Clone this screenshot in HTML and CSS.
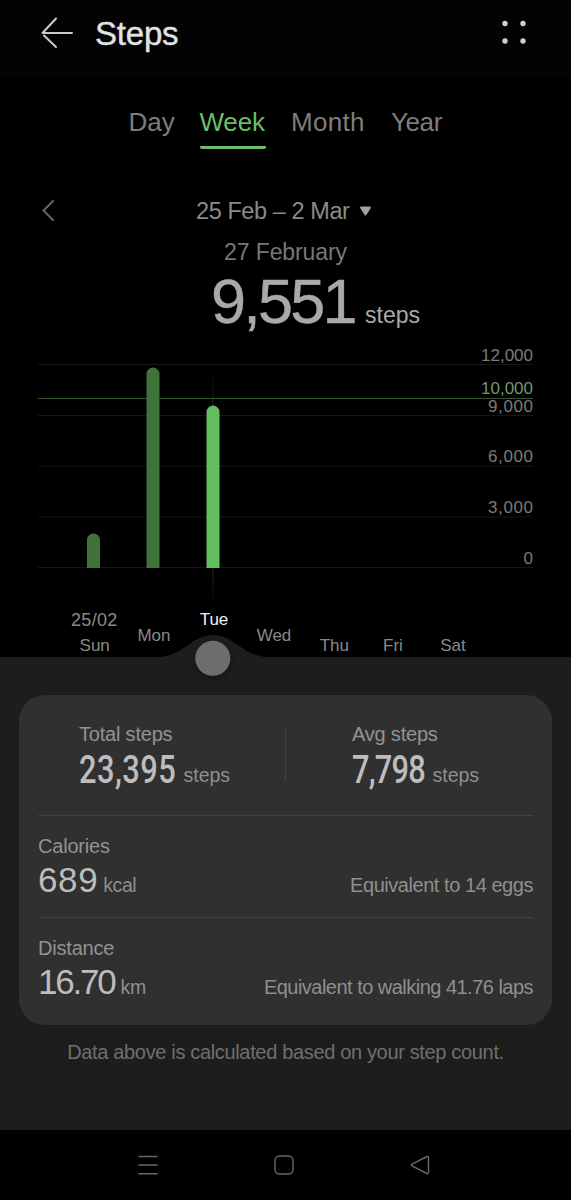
FILE: index.html
```html
<!DOCTYPE html>
<html lang="en">

<head>
    <meta charset="UTF-8">
    <meta name="viewport" content="width=device-width, initial-scale=1.0">
    <title>Steps</title>
    <link rel="stylesheet" href="styles.css">
</head>

<body>
    <div class="screen">
        <header class="topbar">
            <svg class="back" width="34" height="32" viewBox="0 0 34 32">
                <path d="M16 1.5 L2.5 16 M4 18.5 L16 30 M2.5 16 H32" />
            </svg>
            <h1>Steps</h1>
            <svg class="dots" width="28" height="28" viewBox="0 0 28 28">
                <circle cx="5" cy="4.5" r="2.7" />
                <circle cx="23" cy="4.5" r="2.7" />
                <circle cx="5" cy="22" r="2.7" />
                <circle cx="23" cy="22" r="2.7" />
            </svg>
        </header>

        <nav class="tabs">
            <a class="tab day">Day</a>
            <a class="tab active">Week</a>
            <a class="tab month">Month</a>
            <a class="tab year">Year</a>
        </nav>

        <div class="range">
            <svg class="prev" width="14" height="24" viewBox="0 0 14 24">
                <path d="M13 2 L3.5 11.5 L13 21" />
            </svg>
            <span class="range-text">25 Feb – 2 Mar</span>
            <svg class="caret" width="13" height="11" viewBox="0 0 13 11">
                <path d="M2 1.5 H11 L6.5 8.5 Z" />
            </svg>
        </div>

        <div class="date">27 February</div>
        <div class="count"><span class="count-num">9,551</span><span class="count-unit">steps</span></div>

        <svg class="chart" width="571" height="340" viewBox="0 340 571 340">
            <defs>
                <linearGradient id="marker" x1="0" y1="370" x2="0" y2="605" gradientUnits="userSpaceOnUse">
                    <stop offset="0" stop-color="#5fb45a" stop-opacity="0" />
                    <stop offset="0.5" stop-color="#5fb45a" stop-opacity="0.8" />
                    <stop offset="1" stop-color="#5fb45a" stop-opacity="0" />
                </linearGradient>
                <filter id="shadow" x="-50%" y="-50%" width="200%" height="200%">
                    <feDropShadow dx="0" dy="2" stdDeviation="4" flood-color="#000" flood-opacity="0.35" />
                </filter>
            </defs>

            <g class="grid">
                <path d="M38 364.5 H533" />
                <path d="M38 415.5 H533" />
                <path d="M38 466 H533" />
                <path d="M38 517 H533" />
                <path d="M38 567.5 H533" />
            </g>
            <path class="goal" d="M38 398.5 H533" />

            <g class="scale">
                <text x="533" y="360.5" textLength="52">12,000</text>
                <text x="533" y="394" textLength="52" class="goal-text">10,000</text>
                <text x="533" y="411.5" textLength="45">9,000</text>
                <text x="533" y="462" textLength="45">6,000</text>
                <text x="533" y="513" textLength="45">3,000</text>
                <text x="533" y="564">0</text>
            </g>

            <!-- bars -->
            <path class="bar" d="M87 568 V540 A6.5 6.5 0 0 1 100 540 V568 Z" />
            <path class="bar" d="M146.5 568 V374 A6.5 6.5 0 0 1 159.5 374 V568 Z" />
            <rect x="212.3" y="370" width="1.2" height="235" fill="url(#marker)" />
            <path class="bar selected" d="M206.5 568 V412 A6.5 6.5 0 0 1 219.5 412 V568 Z" />

            <!-- top edge of the sheet with the bump under the selected day -->
            <path class="sheet-edge" d="M0 657 H158 C182 657 192 635 213 635 C234 635 244 657 268 657 H571 V680 H0 Z" />
            <circle class="knob" cx="212.8" cy="658.3" r="17.5" filter="url(#shadow)" />

            <g class="days">
                <text x="94.3" y="626" class="first-date">25/02</text>
                <text x="94.7" y="651">Sun</text>
                <text x="154" y="640.5">Mon</text>
                <text x="214" y="624.5" class="today">Tue</text>
                <text x="274" y="641">Wed</text>
                <text x="334.3" y="651">Thu</text>
                <text x="393" y="651">Fri</text>
                <text x="453" y="651">Sat</text>
            </g>
        </svg>

        <main class="sheet">
            <section class="card">
                <div class="totals">
                    <div class="total">
                        <div class="label">Total steps</div>
                        <div class="value"><span class="bold-num wide">23,395</span><span class="unit">steps</span></div>
                    </div>
                    <div class="total avg">
                        <div class="label">Avg steps</div>
                        <div class="value"><span class="bold-num">7,798</span><span class="unit">steps</span></div>
                    </div>
                </div>
                <div class="row">
                    <div class="label">Calories</div>
                    <div class="line">
                        <span class="num">689</span><span class="unit kcal">kcal</span>
                        <span class="note eggs">Equivalent to 14 eggs</span>
                    </div>
                </div>
                <div class="row">
                    <div class="label">Distance</div>
                    <div class="line">
                        <span class="num km-num">16.70</span><span class="unit km">km</span>
                        <span class="note laps">Equivalent to walking 41.76 laps</span>
                    </div>
                </div>
            </section>
            <p class="hint">Data above is calculated based on your step count.</p>
        </main>

        <footer class="navbar">
            <svg width="24" height="24" viewBox="0 0 24 24">
                <path d="M2.5 3.5 H21.5 M2.5 12 H21.5 M2.5 20.7 H21.5" />
            </svg>
            <svg width="24" height="24" viewBox="0 0 24 24">
                <rect x="3" y="3" width="18" height="18" rx="4.5" />
            </svg>
            <svg width="24" height="24" viewBox="0 0 24 24">
                <path d="M19 3.5 L4 11 Q2.4 12 4 13 L19 20.5 Q20.5 21 20.5 19.3 V4.7 Q20.5 3 19 3.5 Z" />
            </svg>
        </footer>
    </div>
</body>

</html>
```
FILE: styles.css
```css
* {
    box-sizing: border-box;
}

body {
    margin: 0;
    background: #000;
    font-family: "Liberation Sans", Arial, sans-serif;
}

.screen {
    width: 571px;
    height: 1200px;
    display: flex;
    flex-direction: column;
    overflow: hidden;
}

svg {
    flex: none;
    display: block;
}

.topbar {
    height: 78px;
    padding: 0 43px 12px 40px;
    display: flex;
    align-items: center;
    background: #030303;
}

.back {
    fill: none;
    stroke: #cbcbcb;
    stroke-width: 2;
    stroke-linecap: round;
    stroke-linejoin: round;
}

h1 {
    margin: 2px auto 0 21px;
    font-size: 33px;
    line-height: 66px;
    font-weight: normal;
    letter-spacing: -0.2px;
    color: #e2e2e2;
    -webkit-text-stroke: 0.4px #e2e2e2;
}

.dots {
    fill: #d0d0d0;
}

.tabs {
    height: 71px;
    padding: 24px 0 0 128.5px;
    display: flex;
    align-items: flex-start;
}

.tab {
    height: 47px;
    font-size: 26px;
    line-height: 40px;
    color: #7d7d7d;
}

.tab.day {
    width: 71px;
}

.tab.active {
    width: 66px;
    color: #6cbd66;
    letter-spacing: -0.2px;
    border-bottom: 3.5px solid #6cbd66;
    border-radius: 2px;
}

.tab.month {
    margin-left: 25.5px;
    width: 100px;
    letter-spacing: 0.3px;
}

.tab.year {
    letter-spacing: -0.4px;
}

.range {
    height: 42px;
    margin-top: 41px;
    padding-left: 40px;
    display: flex;
    align-items: center;
}

.prev {
    fill: none;
    stroke: #666;
    stroke-width: 2;
    stroke-linecap: round;
}

.range-text {
    margin-left: 142px;
    width: 154px;
    font-size: 23.5px;
    letter-spacing: -0.42px;
    white-space: nowrap;
    color: #8a8a8a;
}

.caret {
    margin-left: 9px;
    fill: #a0a0a0;
    stroke: #a0a0a0;
    stroke-width: 2;
    stroke-linejoin: round;
}

.date {
    height: 40px;
    text-align: center;
    font-size: 23px;
    line-height: 40px;
    letter-spacing: -0.1px;
    color: #777;
}

.count {
    height: 68px;
    padding-left: 211px;
    display: flex;
    align-items: baseline;
    line-height: 58px;
}

.count-num {
    width: 154px;
    font-size: 63px;
    letter-spacing: -2.8px;
    color: #a9a9a9;
    -webkit-text-stroke: 0.4px #a9a9a9;
}

.count-unit {
    font-size: 23px;
    color: #a9a9a9;
}

/* chart */
.grid path {
    stroke: #161616;
    stroke-width: 1;
}

.goal {
    stroke: #35532f;
    stroke-width: 1;
}

.scale text {
    font-size: 17px;
    text-anchor: end;
    fill: #7b7b7b;
}

.scale .goal-text {
    fill: #6e9a6b;
}

.bar {
    fill: #3f7339;
}

.bar.selected {
    fill: #62bd5d;
}

.sheet-edge {
    fill: #1d1d1d;
}

.knob {
    fill: #6d6d6d;
}

.days text {
    font-size: 17px;
    text-anchor: middle;
    fill: #8a8a8a;
}

.days .first-date {
    font-size: 18px;
    letter-spacing: 0.3px;
}

.days .today {
    fill: #f2f2f2;
}

/* bottom sheet */
.sheet {
    flex: 1;
    padding: 15px 19px 0;
    background: #1d1d1d;
}

.card {
    height: 330px;
    padding: 0 19px;
    border-radius: 26px;
    background: #303030;
}

.totals {
    height: 120px;
    padding: 26px 0 0 41px;
    display: flex;
}

.total {
    width: 206px;
}

.total.avg {
    height: 53px;
    margin-top: 7px;
    padding-left: 66px;
    border-left: 1px solid #444;
}

.total.avg .label {
    margin-top: -7px;
}

.label {
    font-size: 20px;
    line-height: 26px;
    letter-spacing: -0.2px;
    color: #939393;
}

.value {
    height: 44px;
    display: flex;
    align-items: baseline;
    line-height: 44px;
}

.bold-num {
    width: 80.5px;
    font-family: Roboto, sans-serif;
    font-size: 39px;
    font-weight: 500;
    letter-spacing: -1px;
    white-space: nowrap;
    color: #bdbdbd;
    transform: translateY(0.5px) scaleX(0.79);
    transform-origin: left;
}

.bold-num.wide {
    width: 104.5px;
    letter-spacing: 0.6px;
}

.unit {
    font-size: 19.5px;
    color: #8f8f8f;
}

.row {
    height: 102px;
    padding-top: 17px;
    border-top: 1px solid #424242;
}

.line {
    display: flex;
    align-items: baseline;
    line-height: 41px;
}

.num {
    font-size: 35px;
    letter-spacing: 0.6px;
    color: #bdbdbd;
}

.km-num {
    letter-spacing: -2.2px;
}

.unit.kcal {
    margin-left: 5px;
    letter-spacing: -0.4px;
}

.unit.km {
    margin-left: 6px;
    letter-spacing: -0.4px;
}

.note {
    margin-left: auto;
    font-size: 20px;
    letter-spacing: -0.45px;
    color: #8f8f8f;
}

.note.laps {
    letter-spacing: -0.52px;
}

.hint {
    margin: 0;
    text-align: center;
    font-size: 20px;
    line-height: 54px;
    letter-spacing: -0.34px;
    color: #6f6f6f;
}

.navbar {
    height: 70px;
    padding: 0 139px 0 136px;
    display: flex;
    align-items: center;
    justify-content: space-between;
}

.navbar svg {
    fill: none;
    stroke: #686868;
    stroke-width: 1.4;
}
```
